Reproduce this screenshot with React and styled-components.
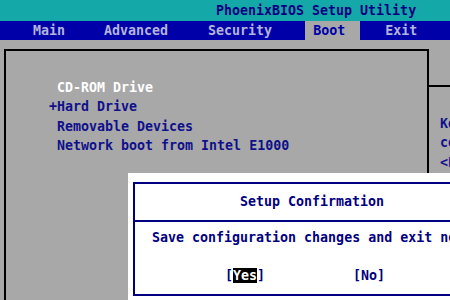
import React from "react";
import styled, { createGlobalStyle } from "styled-components";

const GlobalStyle = createGlobalStyle`
  html, body {
    margin: 0;
    padding: 0;
    background: #a8a8a8;
  }
`;

const bios = {
  cyan: "#14a9a8",
  blue: "#0000a8",
  grey: "#a8a8a8",
  navy: "#10108c",
  menuText: "#b4b4dc",
};

const Screen = styled.div`
  position: relative;
  width: 450px;
  height: 300px;
  overflow: hidden;
  background: ${bios.grey};
  font-family: "DejaVu Sans Mono", "Liberation Mono", monospace;
  font-weight: bold;
  font-size: 13.3px;
  line-height: 19.4px;
  white-space: pre;
`;

const TitleBar = styled.div`
  height: 21px;
  line-height: 21px;
  background: ${bios.cyan};
  color: #000080;
  padding-left: 216px;
`;

const MenuBar = styled.div`
  display: flex;
  height: 19px;
  line-height: 19px;
  background: ${bios.blue};
`;

const MenuItem = styled.div`
  margin-left: ${(p) => p.$gap}px;
  padding: 0 ${(p) => (p.$active ? 15 : 8)}px 0 8px;
  color: ${(p) => (p.$active ? bios.blue : bios.menuText)};
  background: ${(p) => (p.$active ? bios.grey : "transparent")};
`;

const Body = styled.div`
  display: flex;
  padding: 9px 0 0 4px;
  height: 260px;
`;

const MainPanel = styled.div`
  box-sizing: border-box;
  width: 425px;
  flex-shrink: 0;
  border: 2px solid #000;
  border-bottom: none;
  padding: 27px 0 0 43px;
`;

const Row = styled.div`
  height: 19.4px;
  color: ${(p) => (p.$selected ? "#ffffff" : bios.navy)};
`;

const HelpPanel = styled.div`
  flex: 1;
  min-width: 0;
`;

const HelpHeader = styled.div`
  height: 36px;
  border-bottom: 2px solid #000;
`;

const HelpText = styled.div`
  padding: 27px 0 0 11px;
  color: ${bios.navy};
`;

const Dialog = styled.div`
  position: absolute;
  left: 128px;
  top: 173px;
  width: 368px;
  height: 140px;
  box-sizing: border-box;
  padding: 9px 5px 0 5px;
  background: #ffffff;
`;

const DialogFrame = styled.div`
  border: 2px solid #000080;
  height: 114px;
  box-sizing: border-box;
  color: #000080;
`;

const DialogTitle = styled.div`
  box-sizing: border-box;
  height: 38px;
  padding-top: 8px;
  text-align: center;
  border-bottom: 2px solid #000080;
`;

const DialogMessage = styled.div`
  padding: 6px 0 0 17px;
  height: 19.4px;
`;

const ButtonRow = styled.div`
  display: flex;
  gap: 88px;
  padding: 19px 0 0 90px;
`;

const Choice = styled.span``;

const Focus = styled.span`
  background: #000;
  color: #fff;
`;

const helpLines = [
  "Keys used to view or",
  "configure devices:",
  "<Enter> expands or",
  "collapses devices with",
  "a + or -",
];

export default function App() {
  return (
    <Screen>
      <GlobalStyle />
      <TitleBar>PhoenixBIOS Setup Utility</TitleBar>
      <MenuBar>
        <MenuItem $gap={25}>Main</MenuItem>
        <MenuItem $gap={23}>Advanced</MenuItem>
        <MenuItem $gap={24}>Security</MenuItem>
        <MenuItem $gap={25} $active>
          Boot
        </MenuItem>
        <MenuItem $gap={17}>Exit</MenuItem>
      </MenuBar>
      <Body>
        <MainPanel>
          <Row $selected> CD-ROM Drive</Row>
          <Row>+Hard Drive</Row>
          <Row> Removable Devices</Row>
          <Row> Network boot from Intel E1000</Row>
        </MainPanel>
        <HelpPanel>
          <HelpHeader />
          <HelpText>
            {helpLines.map((l) => (
              <Row key={l}>{l}</Row>
            ))}
          </HelpText>
        </HelpPanel>
      </Body>
      <Dialog>
        <DialogFrame>
          <DialogTitle>Setup Confirmation</DialogTitle>
          <DialogMessage>Save configuration changes and exit now?</DialogMessage>
          <ButtonRow>
            <Choice>
              [<Focus>Yes</Focus>]
            </Choice>
            <Choice>[No]</Choice>
          </ButtonRow>
        </DialogFrame>
      </Dialog>
    </Screen>
  );
}
